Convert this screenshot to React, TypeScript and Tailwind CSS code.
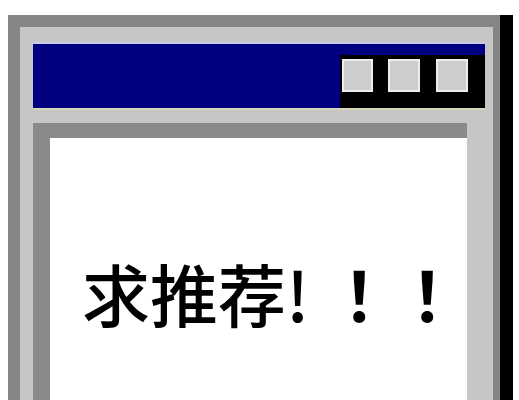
export default function App() {
  return (
    <div className="h-[400px] overflow-hidden bg-white pl-[8px] pt-[15px]">
      <div className="flex h-[400px] w-[505px] flex-col border-r-[13px] border-black bg-[#858585] pl-[12px] pr-[7px] pt-[12px]">
        <div className="flex flex-1 flex-col bg-[#c6c6c6] pl-[13px] pr-[8px] pt-[15px]">
          {/* title bar */}
          <div className="flex h-[66px] justify-end border-t-2 border-[#c9c9ec] bg-[#000080]">
            <div className="mt-[11px] flex w-[145px] bg-black pl-[2px] pt-[4px]">
              <span className="h-[33px] w-[31px] border-2 border-[#ededed] bg-[#cdcdcd]" />
              <span className="ml-[15px] h-[33px] w-[32px] border-2 border-[#ededed] bg-[#cdcdcd]" />
              <span className="ml-[16px] h-[33px] w-[32px] border-2 border-[#ededed] bg-[#cdcdcd]" />
            </div>
          </div>
          <div className="h-[15px] border-t-2 border-[#d6d6b8]" />
          {/* client area */}
          <div className="mr-[18px] flex-1 border-l-[17px] border-t-[15px] border-[#8a8a8a] bg-white pl-[32px] pt-[121px]">
            <p className="whitespace-pre font-['Noto_Sans_CJK_SC','Noto_Sans',sans-serif] text-[68px] font-medium leading-none text-black">
              求推荐!
              <span className="ml-[16px] font-['Noto_Sans_CJK_TC',sans-serif] font-semibold">！！</span>
            </p>
          </div>
        </div>
      </div>
    </div>
  )
}
